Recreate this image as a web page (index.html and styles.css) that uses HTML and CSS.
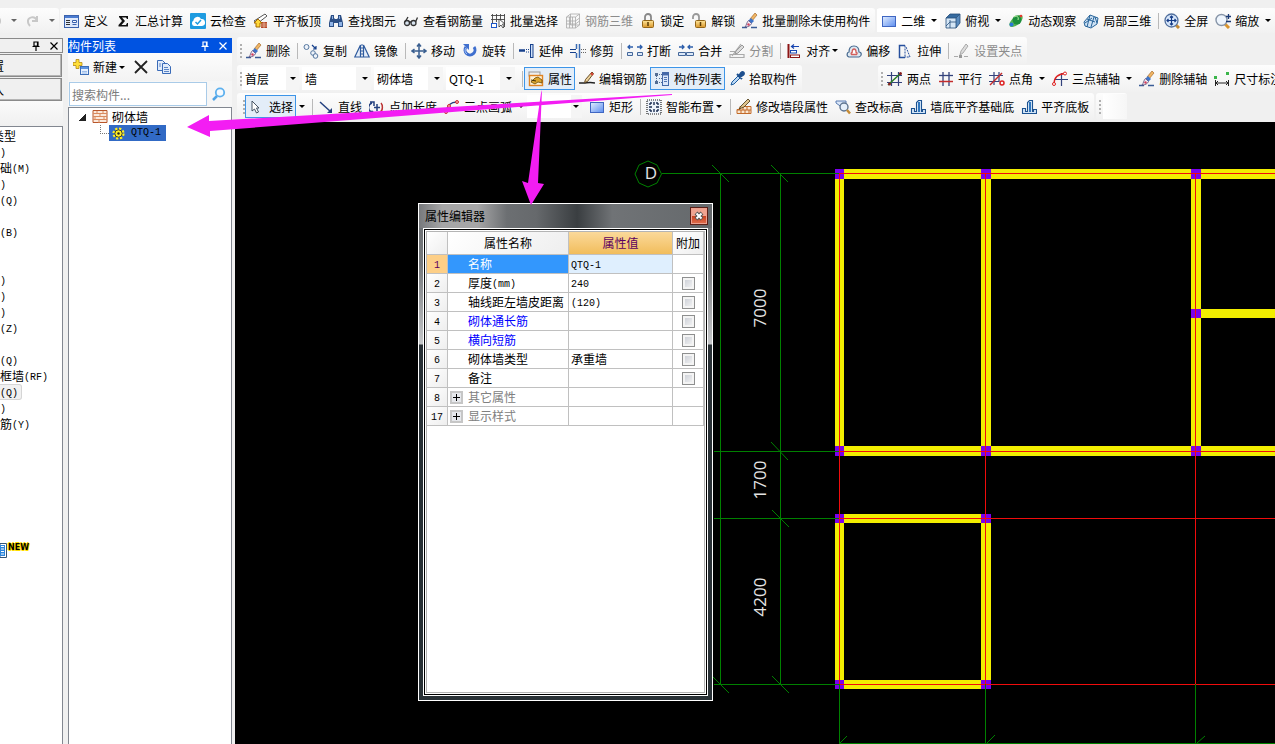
FILE: index.html
```html
<!DOCTYPE html>
<html lang="zh-CN">
<head>
<meta charset="utf-8">
<title>构件列表</title>
<link rel="stylesheet" href="styles.css">
</head>
<body>
<svg class="sprite" aria-hidden="true">
  <defs>
    <linearGradient id="gBlue" x1="0" y1="0" x2="1" y2="1"><stop offset="0" stop-color="#e4efff"/><stop offset="1" stop-color="#5b8def"/></linearGradient>
    <linearGradient id="gGold" x1="0" y1="0" x2="0" y2="1"><stop offset="0" stop-color="#ffe69a"/><stop offset="1" stop-color="#d9962a"/></linearGradient>
  </defs>
  <symbol id="undo" viewBox="0 0 16 16"><path d="M4 3v5h5M4 8c2-5 9-5 9 0 0 3-2 4-3 5" fill="none" stroke="#c4c4c4" stroke-width="2"/></symbol>
  <symbol id="redo" viewBox="0 0 16 16"><path d="M12 3v5H7M12 8C10 2 2 4 3 9c0 2 1 3 2 4" fill="none" stroke="#c8c8c8" stroke-width="2"/></symbol>
  <symbol id="define" viewBox="0 0 16 16"><rect x=".5" y="2.500" width="14" height="12" fill="#dfe9fb" stroke="#3b62ad"/><path d="M1 3h13v2H1z" fill="#4a7bd0"/><path d="M2 7.500h4M2 9.500h4M2 11.500h4" stroke="#333"/><path d="M8.500 7.500h4v2h-4zM8.500 11.500h4" fill="#fff" stroke="#3b62ad"/></symbol>
  <symbol id="sigma" viewBox="0 0 16 16"><path d="M4 3h9v3h-1l-1-1.500H7L10 8l-3.500 4H11l1-2h1v3.500H3.500V12L7 8 4 4z" fill="#111"/></symbol>
  <symbol id="cloud" viewBox="0 0 16 16"><rect width="16" height="16" rx="1" fill="#1e9be0"/><path d="M4 13a3 3 0 0 1-.5-5.500A4 4 0 0 1 11 6a3.500 3.500 0 0 1 1 7z" fill="#fff"/><path d="M5.500 9l2 2 3.500-4" fill="none" stroke="#1e9be0" stroke-width="1.500"/></symbol>
  <symbol id="slab" viewBox="0 0 16 16"><path d="M1 8L12 1l2 2-9 7z" fill="#fff" stroke="#555"/><path d="M8 9h6v6H8z" fill="#b5492a"/><path d="M8 11h6M8 13h6M11 9v6" stroke="#f6d4b8" stroke-width=".6"/><path d="M1 10l4-4 4 4H7v4H3v-4z" fill="#ffd83a" stroke="#a66b00"/></symbol>
  <symbol id="binoc" viewBox="0 0 16 16"><path d="M3 2h3v3l1 1h2l1-1V2h3l2 8v4h-5v-4H6v4H1v-4z" fill="#2c4f86"/><path d="M2 9h3v4H2zM11 9h3v4h-3zM4 3h1v3H4zM11 3h1v3h-1z" fill="#8fb3e6"/></symbol>
  <symbol id="glasses" viewBox="0 0 16 16"><circle cx="4" cy="10" r="2.500" fill="#d7e3ef" stroke="#333" stroke-width="1.300"/><circle cx="10.500" cy="10" r="2.500" fill="#d7e3ef" stroke="#333" stroke-width="1.300"/><path d="M6 9h2M2 9l3-5M12.500 9l2-4.500" fill="none" stroke="#333" stroke-width="1.300"/></symbol>
  <symbol id="batch" viewBox="0 0 16 16"><path d="M2.500 1v10M6.500 1v8M10.500 1v6M14.500 1v13M1 2.500h14M1 6.500h14" fill="none" stroke="#444" stroke-width=".9"/><rect x="1.500" y="10.500" width="5" height="4" fill="#fff" stroke="#1c56c8"/><path d="M9 6v8l2-2 2 3 1-1-1.500-3H15z" fill="#fff" stroke="#333" stroke-width=".8"/></symbol>
  <symbol id="rebar3d" viewBox="0 0 16 16"><path d="M1.500 4v11h9V4zM1.500 4l4-3h9v11l-4 3M10.500 4l4-3M4.500 4v11M7.500 4v11M1.500 8h9l4-3M1.500 11h9l4-3M5.500 1v11h9" fill="none" stroke="#aaa" stroke-width=".8"/></symbol>
  <symbol id="lock" viewBox="0 0 16 16"><path d="M5 8V4a3 3 0 0 1 6 0v4" fill="none" stroke="#888" stroke-width="1.800"/><rect x="2.500" y="7.500" width="11" height="7" rx="1" fill="url(#gGold)" stroke="#94671a"/><path d="M8 9v4" stroke="#5c3d05" stroke-width="1.500"/></symbol>
  <symbol id="unlock" viewBox="0 0 16 16"><path d="M2 6V4a3 3 0 0 1 6 0v4" fill="none" stroke="#999" stroke-width="1.800"/><rect x="4.500" y="7.500" width="10" height="7" rx="1" fill="url(#gGold)" stroke="#94671a"/><path d="M9.500 9v4" stroke="#5c3d05" stroke-width="1.500"/></symbol>
  <symbol id="brush" viewBox="0 0 16 16"><path d="M0 14.500h5M9 14.500h6" stroke="#3a5c96" stroke-width="1.500"/><path d="M13 0l2 2-5 6-2-2z" fill="#f0b565" stroke="#9a5a16" stroke-width=".6"/><path d="M9 5l3 3-2.500 2.500-3-3z" fill="#3f74c8"/><path d="M6.500 7.500l3 3c-1 2.500-3.500 3.500-6.500 3.500 1.500-1.500 1.500-4.500 3.500-6.500z" fill="#f1edf6" stroke="#5a4a78" stroke-width=".8"/><circle cx="6.500" cy="11.500" r="1.200" fill="#d3405c"/></symbol>
  <symbol id="rect" viewBox="0 0 16 16"><rect x="1.500" y="3.500" width="13" height="10" fill="url(#gBlue)" stroke="#3f66c2"/></symbol>
  <symbol id="cube" viewBox="0 0 16 16"><path d="M1 5l4-4h10l-4 4z" fill="#356a9f"/><path d="M11 5l4-4v9l-4 5z" fill="#5b8cbf"/><path d="M1 5h10v10H1z" fill="#d5e6f6"/><path d="M1 5h10v10H1zM1 5l4-4h10v9l-4 5M11 5l4-4M5 7v8M1 13l4-4h6" fill="none" stroke="#234c78" stroke-width=".8"/></symbol>
  <symbol id="orbit" viewBox="0 0 16 16"><ellipse cx="8" cy="8" rx="8" ry="4" transform="rotate(-40 8 8)" fill="#58b352"/><circle cx="9" cy="7" r="4.500" fill="#1c8e3d"/><path d="M6 4c3-2 5 0 4 3" fill="none" stroke="#b6f0a0"/><circle cx="3.500" cy="11.500" r="2" fill="#2877d6"/><circle cx="13" cy="3" r="1.300" fill="#e23b2e"/></symbol>
  <symbol id="local3d" viewBox="0 0 16 16"><path d="M1 9l6-7 8 3-1 6-6 4-6-2z" fill="#cfe2f4" stroke="#27649a"/><path d="M4 6l8 3M7 2l-3 12M11 4L8 14M2 10l7-5M12 4l2 6" fill="none" stroke="#27649a"/></symbol>
  <symbol id="full" viewBox="0 0 16 16"><path d="M12 12l3 3" stroke="#c68a32" stroke-width="3"/><circle cx="7.500" cy="7.500" r="6.500" fill="#d8e7fb" stroke="#52709e" stroke-width="1.300"/><path d="M7.500 3v9M3 7.500h9M6 4.500L7.500 3 9 4.500M6 10.500L7.500 12 9 10.500M4.500 6L3 7.500 4.500 9M10.500 6L12 7.500 10.500 9" fill="none" stroke="#163c86" stroke-width="1.200"/></symbol>
  <symbol id="zoom" viewBox="0 0 16 16"><path d="M10 11l4 4" stroke="#d9942e" stroke-width="3"/><circle cx="6.500" cy="7" r="5.500" fill="#eef5fd" stroke="#8795a8" stroke-width="1.400"/><path d="M13.500 1v5M11 3.500h5M11 8.500h5" stroke="#1b3a75" stroke-width="1.300"/></symbol>
  <symbol id="copy" viewBox="0 0 16 16"><circle cx="3.500" cy="4" r="2.500" fill="#eef3fa" stroke="#55779f"/><circle cx="10" cy="10" r="2.300" fill="#eef3fa" stroke="#55779f"/><circle cx="12.500" cy="13" r="2.300" fill="#eef3fa" stroke="#55779f"/><path d="M9 2l4 4m0-3v3h-3" fill="none" stroke="#17418c" stroke-width="1.200"/></symbol>
  <symbol id="mirror" viewBox="0 0 16 16"><path d="M6.500 2v12H.8zM9.500 2v12h5.700z" fill="#e7effa" stroke="#2f5b9e" stroke-width="1.200"/><path d="M8 1v14" stroke="#2f5b9e" stroke-dasharray="2 1"/></symbol>
  <symbol id="move" viewBox="0 0 16 16"><path d="M8 1v14M1 8h14M6 3.500L8 1l2 2.500M6 12.500L8 15l2-2.500M3.500 6L1 8l2.500 2M12.500 6L15 8l-2.500 2" fill="none" stroke="#3a5f90" stroke-width="1.500"/></symbol>
  <symbol id="rotate" viewBox="0 0 16 16"><path d="M4 4a5 5 0 1 0 8 0" fill="none" stroke="#3f6fce" stroke-width="3"/><path d="M1 1h6v6z" fill="#3f6fce"/><path d="M4 5a4 4 0 0 0 1 6" stroke="#a8c6fa" fill="none"/></symbol>
  <symbol id="extend" viewBox="0 0 16 16"><path d="M0 7.500h6" stroke="#17418c" stroke-width="2.500"/><path d="M7 6.500h4M7 9h4" stroke="#17418c" stroke-dasharray="1 1"/><rect x="11.500" y="1.500" width="2.500" height="13" fill="#cfe0f8" stroke="#17418c"/></symbol>
  <symbol id="trim" viewBox="0 0 16 16"><path d="M0 6.500h6M0 9.500h6" stroke="#17418c"/><path d="M6.500 1v5M6.500 10v5M9.500 1v14" stroke="#3b6cb4" stroke-width="1.500"/><path d="M11 6.500h5M11 9.500h5" stroke="#666" stroke-dasharray="1 1"/></symbol>
  <symbol id="break" viewBox="0 0 16 16"><path d="M1 4h5M15 4h-5M3 2L1 4l2 2M13 2l2 2-2 2" fill="none" stroke="#2b5dab" stroke-width="1.300"/><path d="M.5 9.500h5v3h-5zM10.500 9.500h5v3h-5z" fill="#dce8f8" stroke="#44679a"/></symbol>
  <symbol id="merge" viewBox="0 0 16 16"><path d="M1 4h5M15 4h-5M4 2l2 2-2 2M12 2l-2 2 2 2" fill="none" stroke="#2b5dab" stroke-width="1.300"/><path d="M.5 9.500h7v3h-7zM8.500 9.500h7v3h-7z" fill="#dce8f8" stroke="#44679a"/></symbol>
  <symbol id="split" viewBox="0 0 16 16"><path d="M1 8.500h8M1 11.500h14v3H1zM12 1L3 13" fill="none" stroke="#aaa" stroke-width="1.200"/><path d="M13 2l2 2-6 6-3 1 1-3z" fill="#ddd" stroke="#999"/></symbol>
  <symbol id="align" viewBox="0 0 16 16"><path d="M2.500 1v14" stroke="#8d1515" stroke-width="2"/><path d="M6 3.500h7M8 1.500L5.500 3.500 8 5.500" stroke="#1745b0" fill="none" stroke-width="1.200"/><rect x="4.500" y="7.500" width="6" height="2.500" fill="#fff" stroke="#1745b0"/><rect x="4.500" y="12" width="9" height="2.500" fill="#fff" stroke="#8d1515"/></symbol>
  <symbol id="offset" viewBox="0 0 16 16"><path d="M3 14c-3-1-2-5 0-5 0-3 1-6 5-6s5 3 5 6c3 0 3 4 0 5z" fill="#dfe9f2" stroke="#46698f" stroke-width="1.200"/><path d="M5.500 11.500c-1-1 0-2 .6-2 0-2 .5-3.500 2-3.500s2 1.500 2 3.500c1 0 1.500 1 .4 2z" fill="#fff" stroke="#d2605d" stroke-width="1.300"/></symbol>
  <symbol id="stretch" viewBox="0 0 16 16"><path d="M8 2.500H2.500v12H8" fill="none" stroke="#264f9d" stroke-width="1.500"/><path d="M8 2.500v12M9 4l4 10H8" fill="none" stroke="#264f9d" stroke-dasharray="2 1"/></symbol>
  <symbol id="grippt" viewBox="0 0 16 16"><path d="M0 13.500h4M10 13.500h4" stroke="#aaa"/><rect x="5" y="12" width="3" height="3" fill="#999"/><path d="M12 1l2 2-5 7-3 2 1-4z" fill="#ddd" stroke="#aaa"/></symbol>
  <symbol id="props" viewBox="0 0 16 16"><rect x="1" y="1" width="11" height="4" fill="#eee" stroke="#999"/><rect x="1.500" y="4.500" width="13" height="10" fill="#fff3d8" stroke="#e08424" stroke-width="1.400"/><path d="M3 11l4-4 3-1 4 3v3l-4-1-3 2z" fill="#dba52e" stroke="#6b4a09" stroke-width=".8"/><path d="M3 9l5 1" stroke="#443006"/></symbol>
  <symbol id="editbar" viewBox="0 0 16 16"><path d="M0 12h5c3 0 5-1 11 0" fill="none" stroke="#222" stroke-width="1.500"/><path d="M13 1l1.500 1.500-6 8-3 1 1-3z" fill="#ecd19b" stroke="#5a4018" stroke-width=".9"/><path d="M12 2l2 2" stroke="#d23d2f" stroke-width="2"/></symbol>
  <symbol id="list" viewBox="0 0 16 16"><path d="M1 2h3v3H1zM1 10h3v3H1z" fill="#536d93"/><path d="M2.500 5v5M5 3.500h3M5 7.500h3M5 11.500h3" stroke="#536d93" stroke-dasharray="1 1"/><rect x="8.500" y="1.500" width="6" height="13" fill="#dbe7fa" stroke="#456aa8"/><path d="M9 2h5v2H9zM10 6.500h3M10 8.500h3M10 10.500h3" fill="#456aa8" stroke="#456aa8" stroke-width=".9"/></symbol>
  <symbol id="picker" viewBox="0 0 16 16"><path d="M2 14l1-3 6-6 2 2-6 6z" fill="#bcd9f6" stroke="#1d5c9e"/><path d="M8 3l5 5M10 5l2-3c2-2 4 0 2 2l-3 2z" fill="#1d4f8e" stroke="#1d4f8e" stroke-width="2"/></symbol>
  <symbol id="twopt" viewBox="0 0 16 16"><path d="M4.500 1v14M11.500 1v14M0 4.500h15M0 11.500h15" stroke="#33427c" stroke-width="1.200"/><path d="M1 14L14 2" stroke="#2b7d23" stroke-width="1.500"/><circle cx="13.500" cy="2.500" r="1.500" fill="#8a2020"/><circle cx="2.500" cy="13" r="1.500" fill="#8a2020"/></symbol>
  <symbol id="parallel" viewBox="0 0 16 16"><path d="M5 1v14M11 1v14" stroke="#33427c" stroke-width="1.300"/><path d="M1 4.500h14" stroke="#33427c" stroke-width="1.300"/><path d="M1 10.500h14" stroke="#c42c2c" stroke-width="1.500"/></symbol>
  <symbol id="angle" viewBox="0 0 16 16"><path d="M5 1v13M10 1v10M0 4.500h14M0 10.500h10" stroke="#33427c" stroke-width="1.200"/><path d="M1 14L13 2" stroke="#c42c2c" stroke-width="1.500"/><circle cx="13" cy="12" r="2" fill="none" stroke="#d22" stroke-width="1.500"/></symbol>
  <symbol id="threept" viewBox="0 0 16 16"><path d="M9.500 2v13M3 8.500h13" stroke="#33427c" stroke-width="1.200"/><path d="M2 13C2 7 6 3 13 2.500" fill="none" stroke="#d22" stroke-width="1.300"/><circle cx="2" cy="13" r="1.500" fill="#fff" stroke="#d22"/><circle cx="13" cy="2.500" r="1.500" fill="#fff" stroke="#d22"/></symbol>
  <symbol id="dim" viewBox="0 0 16 16"><path d="M1.500 9v6M14.500 9v6M2 12h12M4 10l-2 2 2 2M12 10l2 2-2 2" fill="none" stroke="#222"/><path d="M0 5h3v3H0zM12 1h3v3h-3z" fill="#3ab54a"/></symbol>
  <symbol id="cursor" viewBox="0 0 16 16"><path d="M3 2v10l2.500-2 2 4 2-1-2-4H10z" fill="#fff" stroke="#345" stroke-width=".9"/></symbol>
  <symbol id="line" viewBox="0 0 16 16"><path d="M2 3l11 10" stroke="#23407f" stroke-width="1.500"/><path d="M14 14v-5l-5 5z" fill="#23407f"/></symbol>
  <symbol id="ptlen" viewBox="0 0 16 16"><path d="M2 13a5 5 0 0 1 1-9M1 3h4v4M8 5v7M5 8.500h6" fill="none" stroke="#23407f" stroke-width="1.500"/><path d="M11 13c3-1 3-7 1-9" fill="none" stroke="#b33" stroke-width="1.500"/><circle cx="3" cy="13" r="1.500" fill="#23407f"/></symbol>
  <symbol id="arc" viewBox="0 0 16 16"><path d="M2 13C3 7 7 3 13 3" fill="none" stroke="#23407f" stroke-width="1.300"/><g fill="#f0a9a0" stroke="#c33"><circle cx="2" cy="13" r="1.500"/><circle cx="5" cy="7" r="1.500"/><circle cx="13" cy="3" r="1.500"/></g></symbol>
  <symbol id="smart" viewBox="0 0 16 16"><rect x="1" y="1" width="14" height="14" fill="#eef3fa" stroke="#222" stroke-width="1.200" stroke-dasharray="1 1"/><path d="M8 3v3M8 10v3M3 8h3M10 8h3M4 4h2M4 4v2M12 4h-2M12 4v2M4 12h2M4 12v-2M12 12h-2M12 12v-2" stroke="#1b2e52" stroke-width="1.400"/></symbol>
  <symbol id="brickedit" viewBox="0 0 16 16"><path d="M4 7.500h11v7H1v-4h3zM1 11h14M7 8v3M11 8v3M5 11v4M9 11v4M13 11v4" fill="#fbe6cf" stroke="#c26b2a"/><path d="M12 0l2 2-6 6-5 2 2-3z" fill="#e0c48c" stroke="#443311" stroke-width=".8"/></symbol>
  <symbol id="elev" viewBox="0 0 16 16"><path d="M1 2h10v3L8 9 1 4z" fill="#dbe7f8" stroke="#5a7db2"/><circle cx="9" cy="8" r="4" fill="#e6f0fb" stroke="#5e7490" stroke-width="1.400"/><path d="M12 11l3 3.500" stroke="#c58b35" stroke-width="2.500"/></symbol>
  <symbol id="base" viewBox="0 0 16 16"><path d="M1.500 9.500h3v3h2v-9l2-2h3v11h1v-2h3v4h-14z" fill="#d4e6f8" stroke="#1b5291" stroke-width="1.100"/><path d="M8 3h2v10H8z" fill="#2f77be"/></symbol>
  <symbol id="new" viewBox="0 0 16 16"><rect x="7.500" y="7.500" width="8" height="8" fill="#e7f0fd" stroke="#3c6eb8"/><path d="M8 8h7v2H8z" fill="#5c93e0"/><path d="M9 12.500h5M9 14h5" stroke="#8bb0e5" stroke-width=".8"/><path d="M3 .5h3v3h3v3H6v3H3v-3H0v-3h3z" fill="#ffdf3a" stroke="#b68a13" stroke-width=".8"/></symbol>
  <symbol id="del" viewBox="0 0 16 16"><path d="M2 2l12 12M14 2L2 14" stroke="#222" stroke-width="1.800"/></symbol>
  <symbol id="pages" viewBox="0 0 16 16"><path d="M1.500 1.500h5l3 3v7h-8z" fill="#e1ecfb" stroke="#3a6bb8"/><path d="M6.500 4.500h5l3 3v7h-8z" fill="#e1ecfb" stroke="#3a6bb8"/><path d="M3 5h2M3 7h2M8 8.500h4M8 10.500h5M8 12.500h5" stroke="#3a6bb8" stroke-width=".8"/></symbol>
  <symbol id="search" viewBox="0 0 16 16"><path d="M6 10l-4 4" stroke="#4fa3e6" stroke-width="2.500"/><circle cx="9" cy="6.500" r="4.200" fill="#f5faff" stroke="#5db0ee" stroke-width="1.800"/></symbol>
  <symbol id="bricks" viewBox="0 0 16 16"><path d="M1 1.500h14v12H1z" fill="#fbe9dc" stroke="#b8562a"/><path d="M1 4.500h14M1 7.500h14M1 10.500h14M5 2v3M11 2v3M8 5v3M3 8v3M12 8v3M7 11v3" stroke="#d98a5e"/></symbol>
  <symbol id="gear" viewBox="0 0 16 16"><circle cx="8" cy="8" r="6" fill="none" stroke="#ffee22" stroke-width="3" stroke-dasharray="2.700 2"/><circle cx="8" cy="8" r="4.500" fill="#ffee22" stroke="#222"/><circle cx="8" cy="8" r="1.500" fill="#222"/></symbol>
  <symbol id="pin" viewBox="0 0 10 10"><path d="M3 1h4v4H3zM1.500 5.500h7M5 6v4M6.500 1v4" fill="none" stroke="currentColor" stroke-width="1.200"/></symbol>
  <symbol id="x" viewBox="0 0 10 10"><path d="M1.500 1.500l7 7M8.500 1.500l-7 7" stroke="currentColor" stroke-width="1.200"/></symbol>
</svg>

<div class="app">
  <header class="topbar">
    <div class="strip strip-cut">
      <button class="tool" aria-label="撤销"><svg class="ico"><use href="#undo"/></svg></button><button class="drop drop-wide dim" aria-label="撤销列表"></button>
      <button class="tool" aria-label="恢复"><svg class="ico"><use href="#redo"/></svg></button><button class="drop drop-wide dim" aria-label="恢复列表"></button>
    </div>
    <div class="strip">
      <button class="tool"><svg class="ico"><use href="#define"/></svg>定义</button>
      <button class="tool"><svg class="ico"><use href="#sigma"/></svg>汇总计算</button>
      <button class="tool"><svg class="ico"><use href="#cloud"/></svg>云检查</button>
      <button class="tool"><svg class="ico"><use href="#slab"/></svg>平齐板顶</button>
      <button class="tool"><svg class="ico"><use href="#binoc"/></svg>查找图元</button>
      <button class="tool"><svg class="ico"><use href="#glasses"/></svg>查看钢筋量</button>
      <button class="tool"><svg class="ico"><use href="#batch"/></svg>批量选择</button>
      <button class="tool off"><svg class="ico"><use href="#rebar3d"/></svg>钢筋三维</button>
      <button class="tool"><svg class="ico"><use href="#lock"/></svg>锁定</button>
      <button class="tool"><svg class="ico"><use href="#unlock"/></svg>解锁</button>
      <button class="tool"><svg class="ico"><use href="#brush"/></svg>批量删除未使用构件</button>
    </div>
    <div class="strip strip-view">
      <span class="pick"><button class="tool"><svg class="ico"><use href="#rect"/></svg>二维</button><button class="drop" aria-label="视图"></button></span>
      <button class="tool"><svg class="ico"><use href="#cube"/></svg>俯视</button><button class="drop" aria-label="俯视列表"></button>
      <button class="tool"><svg class="ico"><use href="#orbit"/></svg>动态观察</button>
      <button class="tool"><svg class="ico"><use href="#local3d"/></svg>局部三维</button>
      <i class="sep"></i>
      <button class="tool"><svg class="ico"><use href="#full"/></svg>全屏</button>
      <button class="tool"><svg class="ico"><use href="#zoom"/></svg>缩放</button><button class="drop" aria-label="缩放列表"></button>
    </div>
  </header>

  <aside class="nav">
    <div class="nav-title"><button class="mini" aria-label="固定"><svg><use href="#pin"/></svg></button><button class="mini" aria-label="关闭"><svg><use href="#x"/></svg></button></div>
    <button class="nav-btn">置</button>
    <button class="nav-btn">入</button>
    <div class="nav-gap"></div>
    <ul class="nav-list">
      <li class="cut">类型</li><li><span class="m">)</span></li><li>础<span class="m">(M)</span></li><li><span class="m">)</span></li>
      <li><span class="m">(Q)</span></li><li></li><li><span class="m">(B)</span></li><li></li><li></li>
      <li><span class="m">)</span></li><li><span class="m">)</span></li><li><span class="m">)</span></li><li><span class="m">(Z)</span></li><li></li>
      <li><span class="m">(Q)</span></li><li>框墙<span class="m">(RF)</span></li><li class="on"><span class="m">(Q)</span></li><li><span class="m">)</span></li><li>筋<span class="m">(Y)</span></li>
      <li class="fresh"><svg width="7" height="15" viewBox="0 0 7 15"><path d="M0 .5h6.500v14H0z" fill="#fff" stroke="#357"/><path d="M0 2h5v11H0z" fill="#2d86dc"/><path d="M1 3.500h3M1 6h3M1 8.500h3M1 11h3" stroke="#fff"/></svg><b>NEW</b></li>
    </ul>
  </aside>

  <section class="parts">
    <div class="parts-title"><span>构件列表</span><button class="mini" aria-label="固定"><svg><use href="#pin"/></svg></button><button class="mini" aria-label="关闭"><svg><use href="#x"/></svg></button></div>
    <div class="parts-bar">
      <button class="tool"><svg class="ico"><use href="#new"/></svg>新建<i class="caret"></i></button>
      <button class="tool" aria-label="删除"><svg class="ico"><use href="#del"/></svg></button>
      <button class="tool" aria-label="复制"><svg class="ico"><use href="#pages"/></svg></button>
    </div>
    <div class="find"><input type="text" placeholder="搜索构件..." aria-label="搜索构件"><button aria-label="搜索"><svg class="ico"><use href="#search"/></svg></button></div>
    <ul class="tree">
      <li><i class="fold"></i><svg class="ico"><use href="#bricks"/></svg><span>砌体墙</span></li>
      <li class="leaf"><i class="elbow"></i><span class="sel"><svg class="gear"><use href="#gear"/></svg><span class="m">QTQ-1</span></span></li>
    </ul>
  </section>

  <main class="work">
    <div class="row">
      <div class="strip grip">
        <button class="tool"><svg class="ico"><use href="#brush"/></svg>删除</button><i class="sep"></i>
        <button class="tool"><svg class="ico"><use href="#copy"/></svg>复制</button>
        <button class="tool"><svg class="ico"><use href="#mirror"/></svg>镜像</button><i class="sep"></i>
        <button class="tool"><svg class="ico"><use href="#move"/></svg>移动</button>
        <button class="tool"><svg class="ico"><use href="#rotate"/></svg>旋转</button><i class="sep"></i>
        <button class="tool"><svg class="ico"><use href="#extend"/></svg>延伸</button>
        <button class="tool"><svg class="ico"><use href="#trim"/></svg>修剪</button><i class="sep"></i>
        <button class="tool"><svg class="ico"><use href="#break"/></svg>打断</button>
        <button class="tool"><svg class="ico"><use href="#merge"/></svg>合并</button>
        <button class="tool off"><svg class="ico"><use href="#split"/></svg>分割</button><i class="sep"></i>
        <button class="tool"><svg class="ico"><use href="#align"/></svg>对齐<i class="caret"></i></button>
        <button class="tool"><svg class="ico"><use href="#offset"/></svg>偏移</button>
        <button class="tool"><svg class="ico"><use href="#stretch"/></svg>拉伸</button><i class="sep"></i>
        <button class="tool off"><svg class="ico"><use href="#grippt"/></svg>设置夹点</button>
      </div>
    </div>
    <div class="row">
      <div class="strip grip">
        <span class="combo combo-s"><select aria-label="楼层"><option>首层</option></select></span>
        <span class="combo"><select aria-label="构件类别"><option>墙</option></select></span>
        <span class="combo"><select aria-label="构件类型"><option>砌体墙</option></select></span>
        <span class="combo"><select aria-label="构件"><option>QTQ-1</option></select></span>
        <i class="sep"></i>
        <button class="tool active"><svg class="ico"><use href="#props"/></svg>属性</button>
        <button class="tool"><svg class="ico"><use href="#editbar"/></svg>编辑钢筋</button>
        <button class="tool active"><svg class="ico"><use href="#list"/></svg>构件列表</button>
        <button class="tool"><svg class="ico"><use href="#picker"/></svg>拾取构件</button>
      </div>
      <div class="strip grip strip-axis">
        <button class="tool"><svg class="ico"><use href="#twopt"/></svg>两点</button>
        <button class="tool"><svg class="ico"><use href="#parallel"/></svg>平行</button>
        <button class="tool"><svg class="ico"><use href="#angle"/></svg>点角</button><button class="drop" aria-label="点角列表"></button>
        <button class="tool"><svg class="ico"><use href="#threept"/></svg>三点辅轴</button><button class="drop" aria-label="三点辅轴列表"></button>
        <button class="tool"><svg class="ico"><use href="#brush"/></svg>删除辅轴</button>
        <button class="tool"><svg class="ico"><use href="#dim"/></svg>尺寸标注</button>
      </div>
    </div>
    <div class="row">
      <div class="strip grip strip-draw">
        <button class="tool active"><svg class="ico"><use href="#cursor"/></svg>选择</button><button class="drop" aria-label="选择列表"></button><i class="sep"></i>
        <button class="tool"><svg class="ico"><use href="#line"/></svg>直线</button>
        <button class="tool"><svg class="ico"><use href="#ptlen"/></svg>点加长度</button>
        <button class="tool"><svg class="ico"><use href="#arc"/></svg>三点画弧</button><button class="drop" aria-label="画弧列表"></button>
        <span class="combo combo-s"><select aria-label="半径"><option></option></select></span>
        <button class="tool"><svg class="ico"><use href="#rect"/></svg>矩形</button><i class="sep"></i>
        <button class="tool"><svg class="ico"><use href="#smart"/></svg>智能布置<i class="caret"></i></button><i class="sep"></i>
        <button class="tool"><svg class="ico"><use href="#brickedit"/></svg>修改墙段属性</button>
        <button class="tool"><svg class="ico"><use href="#elev"/></svg>查改标高</button>
        <button class="tool"><svg class="ico"><use href="#base"/></svg>墙底平齐基础底</button>
        <button class="tool"><svg class="ico"><use href="#base"/></svg>平齐底板</button>
      </div>
      <div class="strip grip strip-end"><span class="blank"></span></div>
    </div>

    <div class="canvas">
      <svg class="plan" aria-label="平面图">
        <g transform="translate(-235 -122)">
          <g fill="#f2ee00">
            <path d="M835 169h600v10H835zM835 446h600v10H835zM1191 309h300v9h-300zM835 514h156v9H835zM835 680h156v9H835z"/>
            <path d="M835 169h9v287h-9zM981 169h10v287h-10zM1191 169h10v287h-10zM835 514h9v175h-9zM981 514h10v175h-10z"/>
          </g>
          <path fill="#7a00ee" d="M835 169h9v10h-9zM981 169h10v10h-10zM1191 169h10v10h-10zM835 446h9v10h-9zM981 446h10v10h-10zM1191 446h10v10h-10zM1191 309h10v9h-10zM835 514h9v9h-9zM981 514h10v9h-10zM835 680h9v9h-9zM981 680h10v9h-10z"/>
          <g fill="none" stroke="#f00c0c" shape-rendering="crispEdges"><path d="M839 173.500h600M839 451.500h600M839 518.500h600M839 684.500h600M839.500 173v511M985.500 173v511M1195.500 173v511"/></g>
          <g fill="none" stroke="#008000" shape-rendering="crispEdges"><path d="M662 173.500h177M714 451.500h125M714 518.500h125M714 684.500h125M720.500 173v511M780.500 173v511M839.500 684v60M985.500 684v60M1195.500 684v60M839 743.500h600"/></g>
          <path fill="none" stroke="#008000" d="M648 161l9 4 4.500 9-4.500 9-9 4-9-4-4-9 4-9zM712 165l17 17M771 165l17 17M771 442l17 18M772 510l17 17M772 676l17 17M712 676l17 17M840 743l7-7M987 743l8-8M1197 743l8-7"/>
          <g class="plan-text">
            <text x="651" y="179">D</text>
            <text transform="translate(766 308) rotate(-90)">7000</text>
            <text transform="translate(766 480) rotate(-90)">1700</text>
            <text transform="translate(766 597) rotate(-90)">4200</text>
          </g>
        </g>
      </svg>

      <section class="dialog" aria-label="属性编辑器">
        <div class="dialog-title"><span>属性编辑器</span><button aria-label="关闭"><svg viewBox="0 0 10 10"><path d="M2 2l6 6M8 2L2 8" stroke="#555" stroke-width="4"/><path d="M2.500 2.500l5 5M7.500 2.500l-5 5" stroke="#fff" stroke-width="2"/></svg></button></div>
        <div class="dialog-body">
          <table>
            <colgroup><col class="c-no"><col class="c-name"><col class="c-val"><col class="c-add"></colgroup>
            <thead><tr><th></th><th>属性名称</th><th class="gold">属性值</th><th>附加</th></tr></thead>
            <tbody>
              <tr class="cur"><th><span class="m">1</span></th><td>名称</td><td><span class="m">QTQ-1</span></td><td></td></tr>
              <tr><th><span class="m">2</span></th><td>厚度<span class="m">(mm)</span></td><td><span class="m">240</span></td><td><input type="checkbox" aria-label="附加 厚度"></td></tr>
              <tr><th><span class="m">3</span></th><td>轴线距左墙皮距离</td><td><span class="m">(120)</span></td><td><input type="checkbox" aria-label="附加 轴线距左墙皮距离"></td></tr>
              <tr class="blue"><th><span class="m">4</span></th><td>砌体通长筋</td><td></td><td><input type="checkbox" aria-label="附加 砌体通长筋"></td></tr>
              <tr class="blue"><th><span class="m">5</span></th><td>横向短筋</td><td></td><td><input type="checkbox" aria-label="附加 横向短筋"></td></tr>
              <tr><th><span class="m">6</span></th><td>砌体墙类型</td><td>承重墙</td><td><input type="checkbox" aria-label="附加 砌体墙类型"></td></tr>
              <tr><th><span class="m">7</span></th><td>备注</td><td></td><td><input type="checkbox" aria-label="附加 备注"></td></tr>
              <tr class="group"><th><span class="m">8</span></th><td><div class="branch"><button class="plus" aria-label="展开"></button>其它属性</div></td><td></td><td></td></tr>
              <tr class="group"><th><span class="m">17</span></th><td><div class="branch"><button class="plus" aria-label="展开"></button>显示样式</div></td><td></td><td></td></tr>
            </tbody>
          </table>
        </div>
      </section>
    </div>
  </main>

  <svg class="marks" aria-hidden="true"><path fill="#f31df3" d="M187 127l22-12v6l463-27v1L210 131v6zM541 93l1-3-4 93 6 1-13 21-9-24 6 2z"/></svg>
</div>
</body>
</html>
```
FILE: styles.css
```css
* { box-sizing: border-box; }
body {
  margin: 0;
  background: #f0f0f0;
  color: #000;
  font: 12px/16px "Noto Sans CJK SC", sans-serif;
  overflow: hidden;
}
button, input, select { font: inherit; color: inherit; }
button { border: 0; background: none; padding: 0; }
ul { list-style: none; margin: 0; padding: 0; }
.sprite { position: absolute; width: 0; height: 0; }
.m { font-family: "Liberation Mono", monospace; font-size: 10px; line-height: 10px; vertical-align: 1px; }

.app {
  position: relative;
  height: 100vh;
  display: grid;
  grid-template: 36px 1fr / 63px 164px 1fr;
  column-gap: 5px;
}
.topbar {
  grid-column: 1 / -1;
  display: flex;
  padding: 8px 0 3px;
  min-width: 0;
  overflow: hidden;
}

/* toolbars */
.strip {
  display: flex;
  flex: none;
  align-items: center;
  padding-right: 2px;
  border-radius: 3px;
  background: linear-gradient(#fdfdfd, #f1f1f1);
}
.strip-cut { margin: 0 1px 0 -17px; padding: 0; }
.strip-view { margin-left: 2px; }
.tool {
  display: flex;
  align-items: center;
  gap: 4px;
  height: 23px;
  padding: 0 2px 0 3px;
  border: 1px solid transparent;
  white-space: nowrap;
}
.active { border-color: #3d95e8; background: #e3edf8; }
.off { color: #8c8c8c; }
.ico { width: 16px; height: 16px; flex: none; }
.sep { width: 1px; height: 16px; margin: 0 1px 0 4px; background: #b9b9b9; }
.drop { width: 12px; height: 23px; display: grid; place-items: center; flex: none; }
.drop-wide { width: 15px; }
.drop::after, .caret, .combo::after {
  content: "";
  border: 3px solid transparent;
  border-top-color: #000;
  border-bottom: 0;
}
.dim::after { border-top-color: #666; }
.caret { margin: 0 1px 0 -2px; }
.pick { display: flex; margin-right: 1px; background: #fff; }
.grip::before {
  content: "";
  width: 2px;
  height: 14px;
  margin-left: 3px;
  background: repeating-linear-gradient(#b0b0b0 0 2px, transparent 2px 4px);
}
.combo {
  display: flex;
  align-items: center;
  width: 69px;
  height: 23px;
  margin-right: 3px;
  background: linear-gradient(90deg, #fff 0 54px, #f5f5f5 54px);
}
.combo::after { margin: 0 3px 0 4px; flex: none; }
.combo select {
  appearance: none;
  flex: 1;
  min-width: 0;
  height: 23px;
  border: 0;
  padding: 0 0 0 3px;
  background: none;
}
.combo-s { width: 57px; background: linear-gradient(90deg, #fff 0 44px, #f5f5f5 44px); }

/* navigation column */
.nav { display: flex; flex-direction: column; overflow: hidden; padding-top: 2px; }
.nav-title {
  display: flex;
  justify-content: flex-end;
  align-items: center;
  gap: 8px;
  height: 15px;
  padding-right: 3px;
  border: 1px solid #8a8a8a;
  border-left: 0;
}
.mini { width: 10px; height: 10px; display: flex; }
.mini svg { width: 10px; height: 10px; }
.nav-btn {
  height: 23px;
  margin: 1px 1px 0 0;
  text-align: left;
  text-indent: -8px;
  border: 1px solid #8a8a8a;
  border-width: 1px 1px 1px 0;
  background: #f0f0f0;
  box-shadow: inset -1px -1px #b5b5b5;
}
.nav-gap { height: 25px; background: linear-gradient(#fafafa, #f0f0f0); }
.nav-list { flex: 1; background: #fff; border: 1px solid #828790; border-left: 0; border-bottom: 0; padding-top: 1px; }
.nav-list li { height: 16px; white-space: nowrap; }
.cut { text-indent: -8px; }
.nav-list .on { width: 22px; border: 1px solid #d5d5d5; border-left: 0; border-radius: 0 3px 3px 0; line-height: 14px; background: #f1f1f1; }
.nav-list .fresh { display: flex; gap: 1px; height: 16px; margin-top: 111px; }
.fresh b {
  font: bold 8px/10px "DejaVu Sans", sans-serif;
  text-shadow: 1px 0 #fd0, -1px 0 #fd0, 0 1px #fd0, 0 -1px #fd0, 1px 1px #fd0;
}

/* component list */
.parts { display: flex; flex-direction: column; min-width: 0; padding-top: 2px; }
.parts-title {
  display: flex;
  align-items: center;
  gap: 8px;
  height: 15px;
  padding-right: 4px;
  background: #0053e1;
  color: #fff;
}
.parts-title span { flex: 1; }
.parts-bar { display: flex; align-items: center; height: 28px; padding-left: 1px; background: linear-gradient(#fcfcfc, #f3f3f3); }
.find { display: flex; height: 26px; padding: 1px; background: #f6f6f6; }
.find input { flex: 1; min-width: 0; height: 24px; border: 1px solid #a9cbe8; padding: 0 2px; background: #fff; outline: 0; }
.find input::placeholder { color: #7c7c7c; opacity: 1; }
.find button { width: 24px; display: grid; place-items: center; }
.tree { flex: 1; background: #fff; border: 1px solid #828790; border-bottom: 0; padding-left: 9px; }
.tree li { display: flex; align-items: center; height: 16px; margin-top: 1px; }
.tree .ico { margin: 0 4px 0 6px; }
.fold { width: 7px; height: 7px; margin-left: 1px; background: linear-gradient(135deg, transparent 50%, #222 50%); }
.tree .leaf { margin-top: 0; }
.elbow { width: 9px; height: 9px; margin: 0 0 7px 22px; border: dotted #777; border-width: 0 0 1px 1px; }
.sel { display: flex; align-items: center; gap: 6px; height: 16px; padding: 0 5px 0 3px; background: #316ac5; }
.gear { width: 13px; height: 13px; }

/* workspace */
.work { display: flex; flex-direction: column; gap: 1px; min-width: 0; padding-top: 1px; margin-left: -2px; }
.row { display: flex; flex: none; height: 27px; margin-left: 2px; overflow: hidden; }
.strip-axis { margin-left: 76px; }
.strip-draw { padding-left: 3px; }
.strip-draw .combo { width: 55px; }
.strip-end { margin-left: 2px; padding: 0; }
.blank { width: 24px; height: 25px; margin-left: 2px; background: linear-gradient(90deg, #fff, #f6f6f6); }
.canvas { position: relative; flex: 1; min-height: 0; margin-top: 1px; background: #000; overflow: hidden; }
.plan { display: block; width: 100%; height: 100%; }
.plan-text { fill: #e4e4e4; font: 17px "Open Sans", sans-serif; text-anchor: middle; }

/* floating property editor */
.dialog {
  position: absolute;
  left: 183px;
  top: 81px;
  width: 295px;
  height: 498px;
  display: flex;
  flex-direction: column;
  padding: 0 4px 4px;
  border: 1px solid #fff;
  background: linear-gradient(#6d7073 0, #777a7d 60px, #c5c7c9 140px, #2a3237 141px);
}
.dialog-title {
  display: flex;
  align-items: center;
  height: 24px;
  margin: 0 -4px;
  padding: 0 4px 0 6px;
  background: linear-gradient(90deg, #77797c 0, #a6a6a7 8%, #a6a6a7 20%, #6c6f72 30%, #66696c 40%, #3a3e41 54%, #707376 66%, #65696c);
}
.dialog-title span { flex: 1; }
.dialog-title button {
  width: 18px;
  height: 18px;
  display: grid;
  place-items: center;
  border: 1px solid #5b2018;
  box-shadow: inset 0 0 0 1px #eda08f;
  background: linear-gradient(#efa491 50%, #c8411f 50%, #e07050);
}
.dialog-title svg { width: 10px; height: 10px; }
.dialog-body {
  flex: 1;
  padding: 3px 2px;
  border: 1px solid #fff;
  box-shadow: inset 0 0 0 1px #000, inset 0 0 0 2px #fff, inset 0 0 0 3px #b4b4b4;
  background: #fff;
}
table { border-collapse: separate; border-spacing: 0; table-layout: fixed; width: 277px; margin-left: 1px; }
.c-no { width: 21px; }
.c-name { width: 121px; }
.c-val { width: 104px; }
.c-add { width: 31px; }
th, td {
  height: 19px;
  padding: 0;
  border: solid #c0c0c0;
  border-width: 0 1px 1px 0;
  font-weight: normal;
  line-height: 16px;
  text-align: left;
  vertical-align: middle;
  white-space: nowrap;
}
th { text-align: center; background: linear-gradient(135deg, #fff, #eee); }
thead th { height: 23px; }
th.gold { background: linear-gradient(#fbd99a, #f1bd5c); color: #5b0060; }
td:nth-child(2) { padding-left: 20px; }
td:nth-child(3) { padding-left: 2px; }
td:nth-child(4) { text-align: center; }
.cur th { background: #fdcf87; color: #5b0060; }
.cur td:nth-child(2) { background: #3397fd; color: #fff; }
.cur td:nth-child(3) { background: #dfeffe; }
.blue td { color: #00f; }
.group td { color: #808080; }
.group td:nth-child(2) { padding-left: 2px; }
td input {
  appearance: none;
  display: block;
  width: 13px;
  height: 13px;
  margin: 0 auto;
  border: 1px solid #8e8f8f;
  background: linear-gradient(135deg, #c6cad2, #f8f8f8);
  box-shadow: inset 0 0 0 2px #f4f4f4;
}
.branch { display: flex; align-items: center; gap: 5px; height: 16px; }
.plus {
  width: 13px;
  height: 13px;
  border: 2px solid #c6c6c6;
  background:
    linear-gradient(#000, #000) center / 7px 1px no-repeat,
    linear-gradient(#000, #000) center / 1px 7px no-repeat,
    #e6e8ec;
}

.marks { position: absolute; left: 0; top: 0; width: 100%; height: 100%; pointer-events: none; }
```
